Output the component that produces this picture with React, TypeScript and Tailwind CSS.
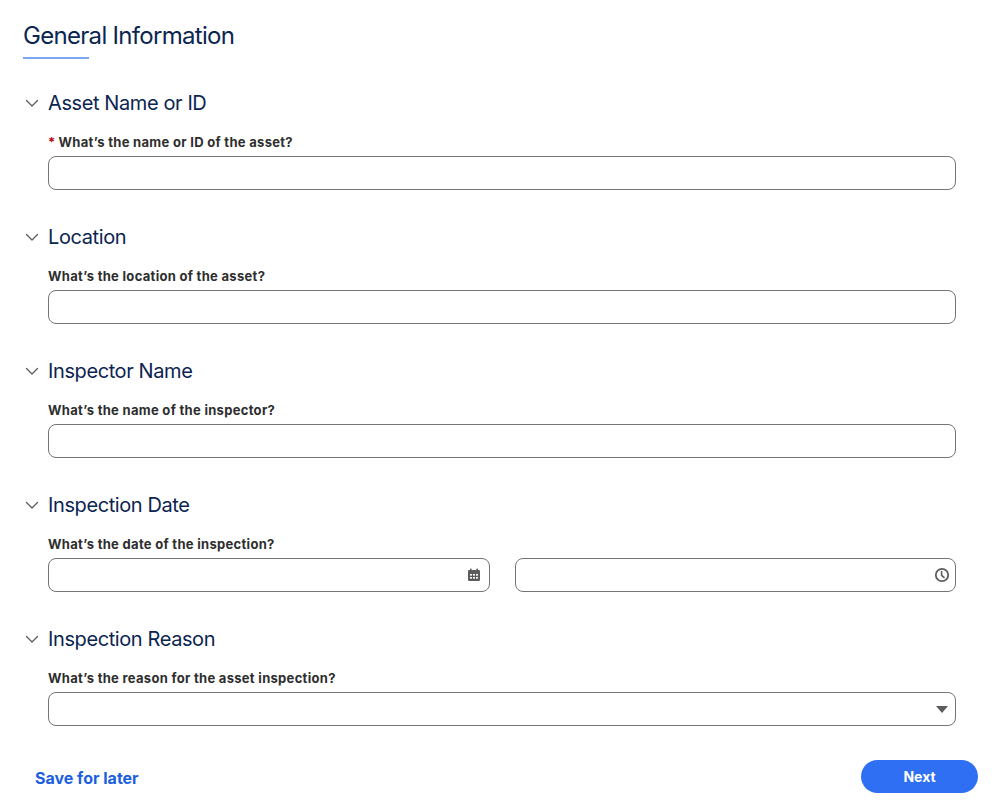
import React from 'react';

function Chevron() {
  return (
    <svg width="16" height="16" viewBox="0 0 16 16" fill="none" className="text-[#5c5c5c]">
      <path d="M2.5 5.5 8 11l5.5-5.5" stroke="currentColor" strokeWidth="1.3" strokeLinecap="round" strokeLinejoin="round" />
    </svg>
  );
}

function CalendarIcon() {
  return (
    <svg width="14" height="14" viewBox="0 0 14 14" className="text-[#5c5c5c]">
      <rect x="3" y="0.5" width="1.6" height="3" rx="0.6" fill="currentColor" />
      <rect x="9.4" y="0.5" width="1.6" height="3" rx="0.6" fill="currentColor" />
      <rect x="1" y="2" width="12" height="11" rx="1.2" fill="currentColor" />
      <g fill="#fff">
        <rect x="3" y="6" width="2" height="1.6" />
        <rect x="6" y="6" width="2" height="1.6" />
        <rect x="9" y="6" width="2" height="1.6" />
        <rect x="3" y="9" width="2" height="1.6" />
        <rect x="6" y="9" width="2" height="1.6" />
        <rect x="9" y="9" width="2" height="1.6" />
      </g>
    </svg>
  );
}

function ClockIcon() {
  return (
    <svg width="16" height="16" viewBox="0 0 16 16" fill="none" className="text-[#5c5c5c]">
      <circle cx="8" cy="8" r="6.2" stroke="currentColor" strokeWidth="1.8" />
      <path d="M7.6 4.6v3.8l2.4 2" stroke="currentColor" strokeWidth="1.6" strokeLinecap="round" strokeLinejoin="round" />
    </svg>
  );
}

function Section({ title, label, required, children }: { title: string; label: string; required?: boolean; children: React.ReactNode }) {
  return (
    <div className="mt-[33px] first:mt-[30px]">
      <div className="flex items-center h-[28px]">
        <div className="w-[25px] pl-[1px] flex items-center"><Chevron /></div>
        <h2 className="text-[20px] leading-[28px] text-[#0b2551] tracking-[-0.4px]">{title}</h2>
      </div>
      <div className="pl-[25px] mt-[16px]">
        <div className="h-[20px] flex items-center text-[13px] font-bold text-[#2e2e2e] tracking-[0.3px]">
          {required && <span className="text-[#ba0517] mr-[3px]">*</span>}
          {label}
        </div>
        <div className="mt-[3px]">{children}</div>
      </div>
    </div>
  );
}

const inputCls = 'h-[34px] w-full rounded-[8px] border border-[#747474] bg-white flex items-center justify-end';

export default function App() {
  return (
    <div className="bg-white min-h-[804px] w-[1000px] font-['Inter',sans-serif]">
      <div className="pl-[23px] pr-[44px] pt-[20px]">
        <h1 className="text-[24px] leading-[32px] text-[#0b2551] tracking-[-0.7px]">General Information</h1>
        <div className="mt-[5px] h-[2px] w-[66px] bg-[#7ba7f2]"></div>

        <div className="flex flex-col">
          <Section title="Asset Name or ID" label="What’s the name or ID of the asset?" required>
            <div className={inputCls}></div>
          </Section>
          <Section title="Location" label="What’s the location of the asset?">
            <div className={inputCls}></div>
          </Section>
          <Section title="Inspector Name" label="What’s the name of the inspector?">
            <div className={inputCls}></div>
          </Section>
          <Section title="Inspection Date" label="What’s the date of the inspection?">
            <div className="flex gap-[25px]">
              <div className={inputCls + ' pr-[8px]'}><CalendarIcon /></div>
              <div className={inputCls + ' pr-[5px]'}><ClockIcon /></div>
            </div>
          </Section>
          <Section title="Inspection Reason" label="What’s the reason for the asset inspection?">
            <div className={inputCls + ' pr-[6px]'}>
              <svg width="14" height="10" viewBox="0 0 14 10" className="text-[#5c5c5c]">
                <path d="M1 2h12L7 9z" fill="currentColor" />
              </svg>
            </div>
          </Section>
        </div>
      </div>

      <div className="mt-[34px] pl-[35px] pr-[22px] flex items-center justify-between">
        <button className="text-[16px] leading-[20px] font-bold text-[#1b5fe0] pt-[2px]">Save for later</button>
        <button className="h-[33px] w-[117px] rounded-full bg-[#2f6ff3] text-white text-[14px] font-bold">Next</button>
      </div>
    </div>
  );
}
